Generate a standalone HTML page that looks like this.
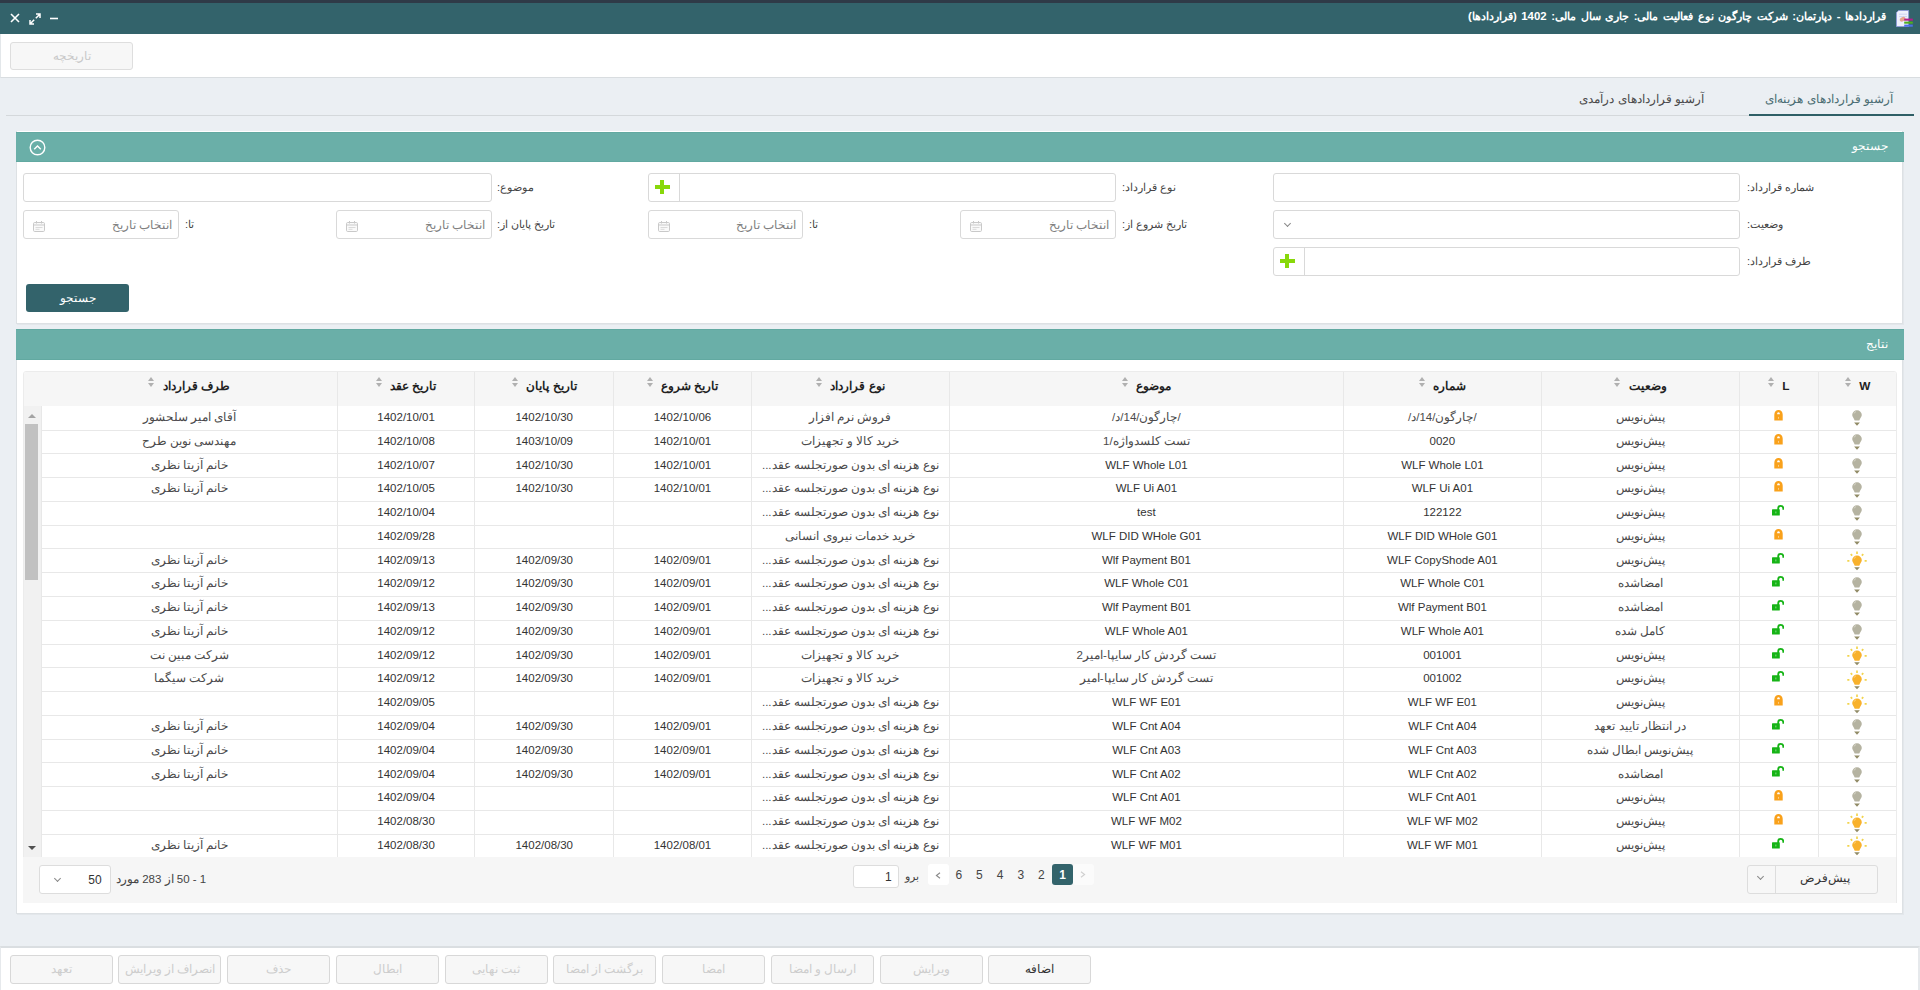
<!DOCTYPE html>
<html lang="fa"><head><meta charset="utf-8"><title>قراردادها</title>
<style>
*{box-sizing:border-box}
html,body{margin:0;padding:0}
body{width:1920px;height:990px;overflow:hidden;position:relative;background:#ebeff3;font-family:"Liberation Sans",sans-serif;font-size:11.5px;color:#333}
.abs{position:absolute}
#strip{left:0;top:0;width:1920px;height:3px;background:#2f3a47}
#title{left:0;top:3px;width:1920px;height:31px;background:#33636b}
#title .t{position:absolute;right:34px;top:5.8px;color:#fff;font-size:11.4px;word-spacing:1.4px;font-weight:bold;direction:rtl;white-space:nowrap}
#toolbar{left:0;top:34px;width:1920px;height:44px;background:#fff;border-bottom:1px solid #d9dde0;border-left:1px solid #e3e7ea}
.hbtn{position:absolute;left:9px;top:8px;width:123px;height:28px;border:1px solid #dedede;border-radius:3px;background:#f7f7f7;color:#c9c9c9;text-align:center;line-height:26px;font-size:11.5px}
#tabline{left:6px;top:115px;width:1908px;height:1px;background:#d4d8db}
#tabul{left:1749px;top:114px;width:165px;height:2.2px;background:#2f5f66}
.tab{position:absolute;top:92px;font-size:11.8px;white-space:nowrap;direction:rtl}
.panel{position:absolute;left:16px;width:1887px;background:#fff;border:1px solid #dde1e4;border-top:none;box-shadow:1px 1px 0 rgba(0,0,0,.03)}
.phead{position:absolute;left:-1px;top:0;width:1888px;height:31px;background:#6aafa8;box-shadow:inset 0 1px 0 #62a9a1,inset 0 -1px 0 #62a9a1}
.phead .t{position:absolute;right:16px;top:8px;color:#fff;font-size:11.5px;direction:rtl}
.inp{position:absolute;height:28.5px;border:1px solid #d9d9d9;border-radius:3px;background:#fff}
.lbl{position:absolute;white-space:nowrap;direction:rtl;font-size:11px;color:#444}
.dp{color:#808080;text-align:right;padding-right:6px;line-height:28.5px;direction:rtl;font-size:11.5px}
.cal{position:absolute;left:8.5px;top:9.5px;width:12px;height:11px}
.plus{position:absolute;left:0;top:0;width:30.5px;height:26.5px;border-right:1px solid #d9d9d9}
.plus:before{content:"";position:absolute;left:5.8px;top:10.7px;width:15px;height:4.2px;background:#88d80a}
.plus:after{content:"";position:absolute;left:11.2px;top:5.8px;width:4.2px;height:14.5px;background:#88d80a}
#sbtn{left:26px;top:284px;width:103px;height:28px;background:#33636b;border-radius:3px;color:#fff;text-align:center;line-height:28px;font-size:11.5px}
#tbl{left:23px;top:371px;width:1873.6px;height:486.5px;border:1px solid #ececec;border-radius:3px 3px 0 0;overflow:hidden;background:#fff}
table{border-collapse:collapse;table-layout:fixed;direction:rtl}
#th{position:absolute;left:-1px;top:-1px;width:1873.6px}
#tb th{height:35.4px;background:#f6f6f6;font-weight:bold;font-size:11.8px;color:#222;border-left:1px solid #e8e8e8;padding:0 0 8px 0;text-align:center;white-space:nowrap}
.srt{display:inline-block;width:8px;height:11px;position:relative;margin-right:6.5px;vertical-align:1.5px}
.srt:before{content:"";position:absolute;left:0;top:0;border-left:3.5px solid transparent;border-right:3.5px solid transparent;border-bottom:4.5px solid #b0b0b0}
.srt:after{content:"";position:absolute;left:0;top:6px;border-left:3.5px solid transparent;border-right:3.5px solid transparent;border-top:4.5px solid #b0b0b0}
#tb{position:absolute;left:-1px;top:-1px;width:1873.6px}
#tb td.sbc{border:none;background:#f1f1f1}
#tb th.sbh{border-left:none}
#tb th:nth-child(10){border-left:none}
#tb td{height:23.768px;border-left:1px solid #e8e8e8;border-bottom:1px solid #e8e8e8;padding:0 0 2.5px 0;line-height:14px;text-align:center;white-space:nowrap;font-size:11.5px;color:#333;overflow:hidden}
#tb td{position:relative}
.ic{position:absolute;left:50%;top:50%}
.fa{color:#4a4a4a}
#sb{position:absolute;left:-1px;top:33.7px;width:18px;height:452px;background:#f1f1f1}
#sb .up{position:absolute;left:5px;top:8px;border-left:4px solid transparent;border-right:4px solid transparent;border-bottom:4px solid #a3a3a3}
#sb .dn{position:absolute;left:5px;top:440px;border-left:4px solid transparent;border-right:4px solid transparent;border-top:4px solid #505050}
#sb .th{position:absolute;left:2px;top:18px;width:13px;height:156px;background:#c1c1c1}
#foot{left:23px;top:857.3px;width:1873.6px;height:45.4px;background:#f6f6f6;border-right:1px solid #eaeaea}
.fsel{position:absolute;height:28.5px;border:1px solid #ddd;border-radius:3px;background:#fff}
.chev{position:absolute;width:6px;height:6px;border-right:1px solid #777;border-bottom:1px solid #777;transform:rotate(45deg)}
.pg{position:absolute;top:864.3px;width:20.5px;height:21px;text-align:center;line-height:23px;font-size:12px;color:#444}
.pg.on{background:#33636b;color:#fff;border-radius:3px;font-weight:bold}
#btoolbar{left:0;top:946px;width:1920px;height:44px;background:#fff;border-top:2px solid #dadee1;border-right:2px solid #e6e9ec;border-left:1px solid #e6e9ec}
.tbtn{position:absolute;top:955px;width:103px;height:28.5px;border:1px solid #d8d8d8;border-radius:3px;background:#f7f7f7;color:#cdcdcd;text-align:center;line-height:26px;font-size:11.5px;direction:rtl}
.tbtn.act{color:#333;background:#f7f7f7}
</style></head>
<body>
<div id="strip" class="abs"></div>
<div id="title" class="abs">
  <div class="t">قراردادها - دپارتمان: شرکت چارگون نوع فعالیت مالی: جاری سال مالی: 1402 (قراردادها)</div>
  <svg class="abs" style="left:1896px;top:7px" width="17" height="17" viewBox="0 0 17 17"><path d="M2.6 .5H12.6V16.5H.5V2.6Z" fill="#eef0fc" stroke="#8d9ad8" stroke-width=".9"/><path d="M3 4.2h8M3 6.6h8" stroke="#c6ccef" stroke-width=".8"/><ellipse cx="6.6" cy="9.3" rx="3" ry="2.1" fill="#e6a48c" transform="rotate(-30 6.6 9.3)"/><rect x="8.2" y="8.6" width="8.6" height="2.1" fill="#b51d8c"/><rect x="8.2" y="11.6" width="8.6" height="2.1" fill="#52ad1f"/><rect x="8.2" y="14.6" width="8.6" height="2.1" fill="#4d6fe6"/></svg>
  <svg class="abs" style="left:10px;top:10px" width="10" height="10" viewBox="0 0 10 10"><path d="M1 1l8 8M9 1l-8 8" stroke="#fff" stroke-width="1.6"/></svg>
  <svg class="abs" style="left:29px;top:10px" width="12" height="12" viewBox="0 0 12 12"><path d="M6.8 5.2L10.8 1.2M7 1h4v4M5.2 6.8L1.2 10.8M1 7v4h4" stroke="#fff" stroke-width="1.5" fill="none"/></svg>
  <svg class="abs" style="left:49px;top:14px" width="10" height="3" viewBox="0 0 10 3"><path d="M1 1.5h8" stroke="#fff" stroke-width="1.6"/></svg>
</div>
<div id="toolbar" class="abs"><div class="hbtn">تاریخچه</div></div>

<div class="tab" style="right:27px;color:#4a6d72">آرشیو قراردادهای هزینه‌ای</div>
<div class="tab" style="right:216px;color:#4a4a4a">آرشیو قراردادهای درآمدی</div>
<div id="tabline" class="abs"></div>
<div id="tabul" class="abs"></div>

<div class="panel" style="top:131px;height:192.5px">
  <div class="phead" style="top:0.8px;height:30.4px"><div class="t" style="top:7.3px">جستجو</div>
    <svg class="abs" style="left:13px;top:7px" width="17" height="17" viewBox="0 0 17 17"><circle cx="8.5" cy="8.5" r="7.3" fill="none" stroke="#fff" stroke-width="1.4"/><path d="M5.2 10.2l3.3-3.3 3.3 3.3" fill="none" stroke="#fff" stroke-width="1.4"/></svg>
  </div>
</div>
<!-- search form (page coords) -->
<div class="inp" style="left:1273px;top:173px;width:467px"></div>
<div class="lbl" style="left:1747px;top:181px">شماره قرارداد:</div>
<div class="inp" style="left:1273px;top:210px;width:467px"><div class="chev" style="left:11px;top:9.5px;width:5px;height:5px;border-color:#888"></div></div>
<div class="lbl" style="left:1747px;top:218px">وضعیت:</div>
<div class="inp" style="left:1273px;top:247px;width:467px"><div class="plus"></div></div>
<div class="lbl" style="left:1747px;top:255px">طرف قرارداد:</div>

<div class="inp" style="left:648px;top:173px;width:468px"><div class="plus"></div></div>
<div class="lbl" style="left:1122px;top:181px">نوع قرارداد:</div>
<div class="inp dp" style="left:960px;top:210px;width:156px"><svg class="cal" viewBox="0 0 12 11"><rect x=".5" y="1.5" width="11" height="9" rx="1.2" fill="#fafafa" stroke="#c9c9c9"/><path d="M.5 4h11" stroke="#c9c9c9"/><path d="M3.5 0v2.5M8.5 0v2.5" stroke="#c9c9c9"/><path d="M2.5 6.5h7M2.5 8.3h4" stroke="#dadada"/></svg>انتخاب تاریخ</div>
<div class="lbl" style="left:1122px;top:218px">تاریخ شروع از:</div>
<div class="inp dp" style="left:648px;top:210px;width:155px"><svg class="cal" viewBox="0 0 12 11"><rect x=".5" y="1.5" width="11" height="9" rx="1.2" fill="#fafafa" stroke="#c9c9c9"/><path d="M.5 4h11" stroke="#c9c9c9"/><path d="M3.5 0v2.5M8.5 0v2.5" stroke="#c9c9c9"/><path d="M2.5 6.5h7M2.5 8.3h4" stroke="#dadada"/></svg>انتخاب تاریخ</div>
<div class="lbl" style="left:809px;top:218px">تا:</div>

<div class="inp" style="left:23px;top:173px;width:469px"></div>
<div class="lbl" style="left:497px;top:181px">موضوع:</div>
<div class="inp dp" style="left:336px;top:210px;width:156px"><svg class="cal" viewBox="0 0 12 11"><rect x=".5" y="1.5" width="11" height="9" rx="1.2" fill="#fafafa" stroke="#c9c9c9"/><path d="M.5 4h11" stroke="#c9c9c9"/><path d="M3.5 0v2.5M8.5 0v2.5" stroke="#c9c9c9"/><path d="M2.5 6.5h7M2.5 8.3h4" stroke="#dadada"/></svg>انتخاب تاریخ</div>
<div class="lbl" style="left:497px;top:218px">تاریخ پایان از:</div>
<div class="inp dp" style="left:23px;top:210px;width:156px"><svg class="cal" viewBox="0 0 12 11"><rect x=".5" y="1.5" width="11" height="9" rx="1.2" fill="#fafafa" stroke="#c9c9c9"/><path d="M.5 4h11" stroke="#c9c9c9"/><path d="M3.5 0v2.5M8.5 0v2.5" stroke="#c9c9c9"/><path d="M2.5 6.5h7M2.5 8.3h4" stroke="#dadada"/></svg>انتخاب تاریخ</div>
<div class="lbl" style="left:185px;top:218px">تا:</div>
<div id="sbtn" class="abs">جستجو</div>

<div class="panel" style="top:329px;height:585px">
  <div class="phead"><div class="t">نتایج</div></div>
</div>

<div id="tbl" class="abs">
  <table id="tb"><colgroup><col style="width:78.60px"><col style="width:78.70px"><col style="width:198.10px"><col style="width:197.70px"><col style="width:394.30px"><col style="width:198.00px"><col style="width:137.50px"><col style="width:139.00px"><col style="width:137.30px"><col style="width:296.40px"><col style="width:18px"></colgroup><tr><th>W<span class="srt"></span></th><th>L<span class="srt"></span></th><th>وضعیت<span class="srt"></span></th><th>شماره<span class="srt"></span></th><th>موضوع<span class="srt"></span></th><th>نوع قرارداد<span class="srt"></span></th><th>تاریخ شروع<span class="srt"></span></th><th>تاریخ پایان<span class="srt"></span></th><th>تاریخ عقد<span class="srt"></span></th><th>طرف قرارداد<span class="srt"></span></th><th class="sbh"></th></tr><tr><td><svg class="ic" style="margin:-7.95px 0 0 -6.55px" width="12" height="17" viewBox="0 0 12 17"><path d="M1.2 5.1A4.8 4.8 0 1 1 10.8 5.1C10.8 7 9 8.3 8.3 10.5H3.7C3 8.3 1.2 7 1.2 5.1Z" fill="#b5b3a1"/><path d="M3.2 3.4A3.2 3.2 0 0 1 4.8 1.6" stroke="#e6e5dc" stroke-width=".7" fill="none"/><path d="M3.1 12.4H8.9L6 15.7Z" fill="#918b66"/></svg></td><td><svg class="ic" style="margin:-8.3px 0 0 -4.8px" width="9" height="11" viewBox="0 0 9 11"><path d="M.3 10.6V4.8C.3 1.6 2 0 4.5 0S8.7 1.6 8.7 4.8V10.6Z" fill="#f9a11b"/><path d="M3.1 4.3C3.1 3 3.6 2.3 4.5 2.3S5.9 3 5.9 4.3Z" fill="#fff"/><rect x="4.15" y="6.9" width=".7" height="1.9" fill="#fde0b0"/></svg></td><td><span class="fa">پیش‌نویس</span></td><td><span class="fa">/چارگون/14/د/</span></td><td><span class="fa">/چارگون/14/د/</span></td><td><span class="fa">فروش نرم افزار</span></td><td>1402/10/06</td><td>1402/10/30</td><td>1402/10/01</td><td><span class="fa">آقای امیر سلحشور</span></td><td class="sbc"></td></tr><tr><td><svg class="ic" style="margin:-7.95px 0 0 -6.55px" width="12" height="17" viewBox="0 0 12 17"><path d="M1.2 5.1A4.8 4.8 0 1 1 10.8 5.1C10.8 7 9 8.3 8.3 10.5H3.7C3 8.3 1.2 7 1.2 5.1Z" fill="#b5b3a1"/><path d="M3.2 3.4A3.2 3.2 0 0 1 4.8 1.6" stroke="#e6e5dc" stroke-width=".7" fill="none"/><path d="M3.1 12.4H8.9L6 15.7Z" fill="#918b66"/></svg></td><td><svg class="ic" style="margin:-8.3px 0 0 -4.8px" width="9" height="11" viewBox="0 0 9 11"><path d="M.3 10.6V4.8C.3 1.6 2 0 4.5 0S8.7 1.6 8.7 4.8V10.6Z" fill="#f9a11b"/><path d="M3.1 4.3C3.1 3 3.6 2.3 4.5 2.3S5.9 3 5.9 4.3Z" fill="#fff"/><rect x="4.15" y="6.9" width=".7" height="1.9" fill="#fde0b0"/></svg></td><td><span class="fa">پیش‌نویس</span></td><td>0020</td><td><span class="fa">تست کلسدواژه/1</span></td><td><span class="fa">خرید کالا و تجهیزات</span></td><td>1402/10/01</td><td>1403/10/09</td><td>1402/10/08</td><td><span class="fa">مهندسی نوین طرح</span></td><td class="sbc"></td></tr><tr><td><svg class="ic" style="margin:-7.95px 0 0 -6.55px" width="12" height="17" viewBox="0 0 12 17"><path d="M1.2 5.1A4.8 4.8 0 1 1 10.8 5.1C10.8 7 9 8.3 8.3 10.5H3.7C3 8.3 1.2 7 1.2 5.1Z" fill="#b5b3a1"/><path d="M3.2 3.4A3.2 3.2 0 0 1 4.8 1.6" stroke="#e6e5dc" stroke-width=".7" fill="none"/><path d="M3.1 12.4H8.9L6 15.7Z" fill="#918b66"/></svg></td><td><svg class="ic" style="margin:-8.3px 0 0 -4.8px" width="9" height="11" viewBox="0 0 9 11"><path d="M.3 10.6V4.8C.3 1.6 2 0 4.5 0S8.7 1.6 8.7 4.8V10.6Z" fill="#f9a11b"/><path d="M3.1 4.3C3.1 3 3.6 2.3 4.5 2.3S5.9 3 5.9 4.3Z" fill="#fff"/><rect x="4.15" y="6.9" width=".7" height="1.9" fill="#fde0b0"/></svg></td><td><span class="fa">پیش‌نویس</span></td><td>WLF Whole L01</td><td>WLF Whole L01</td><td><span class="fa">نوع هزینه ای بدون صورتجلسه عقد...</span></td><td>1402/10/01</td><td>1402/10/30</td><td>1402/10/07</td><td><span class="fa">خانم آزیتا نظری</span></td><td class="sbc"></td></tr><tr><td><svg class="ic" style="margin:-7.95px 0 0 -6.55px" width="12" height="17" viewBox="0 0 12 17"><path d="M1.2 5.1A4.8 4.8 0 1 1 10.8 5.1C10.8 7 9 8.3 8.3 10.5H3.7C3 8.3 1.2 7 1.2 5.1Z" fill="#b5b3a1"/><path d="M3.2 3.4A3.2 3.2 0 0 1 4.8 1.6" stroke="#e6e5dc" stroke-width=".7" fill="none"/><path d="M3.1 12.4H8.9L6 15.7Z" fill="#918b66"/></svg></td><td><svg class="ic" style="margin:-8.3px 0 0 -4.8px" width="9" height="11" viewBox="0 0 9 11"><path d="M.3 10.6V4.8C.3 1.6 2 0 4.5 0S8.7 1.6 8.7 4.8V10.6Z" fill="#f9a11b"/><path d="M3.1 4.3C3.1 3 3.6 2.3 4.5 2.3S5.9 3 5.9 4.3Z" fill="#fff"/><rect x="4.15" y="6.9" width=".7" height="1.9" fill="#fde0b0"/></svg></td><td><span class="fa">پیش‌نویس</span></td><td>WLF Ui A01</td><td>WLF Ui A01</td><td><span class="fa">نوع هزینه ای بدون صورتجلسه عقد...</span></td><td>1402/10/01</td><td>1402/10/30</td><td>1402/10/05</td><td><span class="fa">خانم آزیتا نظری</span></td><td class="sbc"></td></tr><tr><td><svg class="ic" style="margin:-7.95px 0 0 -6.55px" width="12" height="17" viewBox="0 0 12 17"><path d="M1.2 5.1A4.8 4.8 0 1 1 10.8 5.1C10.8 7 9 8.3 8.3 10.5H3.7C3 8.3 1.2 7 1.2 5.1Z" fill="#b5b3a1"/><path d="M3.2 3.4A3.2 3.2 0 0 1 4.8 1.6" stroke="#e6e5dc" stroke-width=".7" fill="none"/><path d="M3.1 12.4H8.9L6 15.7Z" fill="#918b66"/></svg></td><td><svg class="ic" style="margin:-8.3px 0 0 -6.3px" width="12" height="11" viewBox="0 0 12 11"><path d="M6.2 5V3.5A2.55 2.55 0 0 1 11.3 3.5V4.7" stroke="#16b416" stroke-width="1.8" fill="none"/><rect x="0" y="4.2" width="7.8" height="6.4" rx=".6" fill="#16b416"/><rect x="3.55" y="6.5" width=".7" height="1.9" fill="#b5e8b5"/></svg></td><td><span class="fa">پیش‌نویس</span></td><td>122122</td><td>test</td><td><span class="fa">نوع هزینه ای بدون صورتجلسه عقد...</span></td><td></td><td></td><td>1402/10/04</td><td></td><td class="sbc"></td></tr><tr><td><svg class="ic" style="margin:-7.95px 0 0 -6.55px" width="12" height="17" viewBox="0 0 12 17"><path d="M1.2 5.1A4.8 4.8 0 1 1 10.8 5.1C10.8 7 9 8.3 8.3 10.5H3.7C3 8.3 1.2 7 1.2 5.1Z" fill="#b5b3a1"/><path d="M3.2 3.4A3.2 3.2 0 0 1 4.8 1.6" stroke="#e6e5dc" stroke-width=".7" fill="none"/><path d="M3.1 12.4H8.9L6 15.7Z" fill="#918b66"/></svg></td><td><svg class="ic" style="margin:-8.3px 0 0 -4.8px" width="9" height="11" viewBox="0 0 9 11"><path d="M.3 10.6V4.8C.3 1.6 2 0 4.5 0S8.7 1.6 8.7 4.8V10.6Z" fill="#f9a11b"/><path d="M3.1 4.3C3.1 3 3.6 2.3 4.5 2.3S5.9 3 5.9 4.3Z" fill="#fff"/><rect x="4.15" y="6.9" width=".7" height="1.9" fill="#fde0b0"/></svg></td><td><span class="fa">پیش‌نویس</span></td><td>WLF DID WHole G01</td><td>WLF DID WHole G01</td><td><span class="fa">خرید خدمات نیروی انسانی</span></td><td></td><td></td><td>1402/09/28</td><td></td><td class="sbc"></td></tr><tr><td><svg class="ic" style="margin:-9.75px 0 0 -10.3px" width="20" height="20" viewBox="0 0 20 20"><path d="M5.2 9.3A4.8 4.8 0 1 1 14.8 9.3C14.8 11.2 13 12.5 12.3 14.7H7.7C7 12.5 5.2 11.2 5.2 9.3Z" fill="#f8b12c"/><path d="M7.2 7.6A3.2 3.2 0 0 1 8.8 5.8" stroke="#fde7b0" stroke-width=".7" fill="none"/><g stroke="#f2d44c" stroke-width="1.7"><path d="M10 .6V3.1M3.7 3.1L5.2 4.6M16.3 3.1L14.8 4.6M.3 9.8H2.4M17.6 9.8H19.7"/></g><path d="M7.2 16.2H12.8L10 19.3Z" fill="#918b66"/></svg></td><td><svg class="ic" style="margin:-8.3px 0 0 -6.3px" width="12" height="11" viewBox="0 0 12 11"><path d="M6.2 5V3.5A2.55 2.55 0 0 1 11.3 3.5V4.7" stroke="#16b416" stroke-width="1.8" fill="none"/><rect x="0" y="4.2" width="7.8" height="6.4" rx=".6" fill="#16b416"/><rect x="3.55" y="6.5" width=".7" height="1.9" fill="#b5e8b5"/></svg></td><td><span class="fa">پیش‌نویس</span></td><td>WLF CopyShode A01</td><td>Wlf Payment B01</td><td><span class="fa">نوع هزینه ای بدون صورتجلسه عقد...</span></td><td>1402/09/01</td><td>1402/09/30</td><td>1402/09/13</td><td><span class="fa">خانم آزیتا نظری</span></td><td class="sbc"></td></tr><tr><td><svg class="ic" style="margin:-7.95px 0 0 -6.55px" width="12" height="17" viewBox="0 0 12 17"><path d="M1.2 5.1A4.8 4.8 0 1 1 10.8 5.1C10.8 7 9 8.3 8.3 10.5H3.7C3 8.3 1.2 7 1.2 5.1Z" fill="#b5b3a1"/><path d="M3.2 3.4A3.2 3.2 0 0 1 4.8 1.6" stroke="#e6e5dc" stroke-width=".7" fill="none"/><path d="M3.1 12.4H8.9L6 15.7Z" fill="#918b66"/></svg></td><td><svg class="ic" style="margin:-8.3px 0 0 -6.3px" width="12" height="11" viewBox="0 0 12 11"><path d="M6.2 5V3.5A2.55 2.55 0 0 1 11.3 3.5V4.7" stroke="#16b416" stroke-width="1.8" fill="none"/><rect x="0" y="4.2" width="7.8" height="6.4" rx=".6" fill="#16b416"/><rect x="3.55" y="6.5" width=".7" height="1.9" fill="#b5e8b5"/></svg></td><td><span class="fa">امضاشده</span></td><td>WLF Whole C01</td><td>WLF Whole C01</td><td><span class="fa">نوع هزینه ای بدون صورتجلسه عقد...</span></td><td>1402/09/01</td><td>1402/09/30</td><td>1402/09/12</td><td><span class="fa">خانم آزیتا نظری</span></td><td class="sbc"></td></tr><tr><td><svg class="ic" style="margin:-7.95px 0 0 -6.55px" width="12" height="17" viewBox="0 0 12 17"><path d="M1.2 5.1A4.8 4.8 0 1 1 10.8 5.1C10.8 7 9 8.3 8.3 10.5H3.7C3 8.3 1.2 7 1.2 5.1Z" fill="#b5b3a1"/><path d="M3.2 3.4A3.2 3.2 0 0 1 4.8 1.6" stroke="#e6e5dc" stroke-width=".7" fill="none"/><path d="M3.1 12.4H8.9L6 15.7Z" fill="#918b66"/></svg></td><td><svg class="ic" style="margin:-8.3px 0 0 -6.3px" width="12" height="11" viewBox="0 0 12 11"><path d="M6.2 5V3.5A2.55 2.55 0 0 1 11.3 3.5V4.7" stroke="#16b416" stroke-width="1.8" fill="none"/><rect x="0" y="4.2" width="7.8" height="6.4" rx=".6" fill="#16b416"/><rect x="3.55" y="6.5" width=".7" height="1.9" fill="#b5e8b5"/></svg></td><td><span class="fa">امضاشده</span></td><td>Wlf Payment B01</td><td>Wlf Payment B01</td><td><span class="fa">نوع هزینه ای بدون صورتجلسه عقد...</span></td><td>1402/09/01</td><td>1402/09/30</td><td>1402/09/13</td><td><span class="fa">خانم آزیتا نظری</span></td><td class="sbc"></td></tr><tr><td><svg class="ic" style="margin:-7.95px 0 0 -6.55px" width="12" height="17" viewBox="0 0 12 17"><path d="M1.2 5.1A4.8 4.8 0 1 1 10.8 5.1C10.8 7 9 8.3 8.3 10.5H3.7C3 8.3 1.2 7 1.2 5.1Z" fill="#b5b3a1"/><path d="M3.2 3.4A3.2 3.2 0 0 1 4.8 1.6" stroke="#e6e5dc" stroke-width=".7" fill="none"/><path d="M3.1 12.4H8.9L6 15.7Z" fill="#918b66"/></svg></td><td><svg class="ic" style="margin:-8.3px 0 0 -6.3px" width="12" height="11" viewBox="0 0 12 11"><path d="M6.2 5V3.5A2.55 2.55 0 0 1 11.3 3.5V4.7" stroke="#16b416" stroke-width="1.8" fill="none"/><rect x="0" y="4.2" width="7.8" height="6.4" rx=".6" fill="#16b416"/><rect x="3.55" y="6.5" width=".7" height="1.9" fill="#b5e8b5"/></svg></td><td><span class="fa">کامل شده</span></td><td>WLF Whole A01</td><td>WLF Whole A01</td><td><span class="fa">نوع هزینه ای بدون صورتجلسه عقد...</span></td><td>1402/09/01</td><td>1402/09/30</td><td>1402/09/12</td><td><span class="fa">خانم آزیتا نظری</span></td><td class="sbc"></td></tr><tr><td><svg class="ic" style="margin:-9.75px 0 0 -10.3px" width="20" height="20" viewBox="0 0 20 20"><path d="M5.2 9.3A4.8 4.8 0 1 1 14.8 9.3C14.8 11.2 13 12.5 12.3 14.7H7.7C7 12.5 5.2 11.2 5.2 9.3Z" fill="#f8b12c"/><path d="M7.2 7.6A3.2 3.2 0 0 1 8.8 5.8" stroke="#fde7b0" stroke-width=".7" fill="none"/><g stroke="#f2d44c" stroke-width="1.7"><path d="M10 .6V3.1M3.7 3.1L5.2 4.6M16.3 3.1L14.8 4.6M.3 9.8H2.4M17.6 9.8H19.7"/></g><path d="M7.2 16.2H12.8L10 19.3Z" fill="#918b66"/></svg></td><td><svg class="ic" style="margin:-8.3px 0 0 -6.3px" width="12" height="11" viewBox="0 0 12 11"><path d="M6.2 5V3.5A2.55 2.55 0 0 1 11.3 3.5V4.7" stroke="#16b416" stroke-width="1.8" fill="none"/><rect x="0" y="4.2" width="7.8" height="6.4" rx=".6" fill="#16b416"/><rect x="3.55" y="6.5" width=".7" height="1.9" fill="#b5e8b5"/></svg></td><td><span class="fa">پیش‌نویس</span></td><td>001001</td><td><span class="fa">تست گردش کار سایپا-امیر2</span></td><td><span class="fa">خرید کالا و تجهیزات</span></td><td>1402/09/01</td><td>1402/09/30</td><td>1402/09/12</td><td><span class="fa">شرکت مبین نت</span></td><td class="sbc"></td></tr><tr><td><svg class="ic" style="margin:-9.75px 0 0 -10.3px" width="20" height="20" viewBox="0 0 20 20"><path d="M5.2 9.3A4.8 4.8 0 1 1 14.8 9.3C14.8 11.2 13 12.5 12.3 14.7H7.7C7 12.5 5.2 11.2 5.2 9.3Z" fill="#f8b12c"/><path d="M7.2 7.6A3.2 3.2 0 0 1 8.8 5.8" stroke="#fde7b0" stroke-width=".7" fill="none"/><g stroke="#f2d44c" stroke-width="1.7"><path d="M10 .6V3.1M3.7 3.1L5.2 4.6M16.3 3.1L14.8 4.6M.3 9.8H2.4M17.6 9.8H19.7"/></g><path d="M7.2 16.2H12.8L10 19.3Z" fill="#918b66"/></svg></td><td><svg class="ic" style="margin:-8.3px 0 0 -6.3px" width="12" height="11" viewBox="0 0 12 11"><path d="M6.2 5V3.5A2.55 2.55 0 0 1 11.3 3.5V4.7" stroke="#16b416" stroke-width="1.8" fill="none"/><rect x="0" y="4.2" width="7.8" height="6.4" rx=".6" fill="#16b416"/><rect x="3.55" y="6.5" width=".7" height="1.9" fill="#b5e8b5"/></svg></td><td><span class="fa">پیش‌نویس</span></td><td>001002</td><td><span class="fa">تست گردش کار سایپا-امیر</span></td><td><span class="fa">خرید کالا و تجهیزات</span></td><td>1402/09/01</td><td>1402/09/30</td><td>1402/09/12</td><td><span class="fa">شرکت سیگما</span></td><td class="sbc"></td></tr><tr><td><svg class="ic" style="margin:-9.75px 0 0 -10.3px" width="20" height="20" viewBox="0 0 20 20"><path d="M5.2 9.3A4.8 4.8 0 1 1 14.8 9.3C14.8 11.2 13 12.5 12.3 14.7H7.7C7 12.5 5.2 11.2 5.2 9.3Z" fill="#f8b12c"/><path d="M7.2 7.6A3.2 3.2 0 0 1 8.8 5.8" stroke="#fde7b0" stroke-width=".7" fill="none"/><g stroke="#f2d44c" stroke-width="1.7"><path d="M10 .6V3.1M3.7 3.1L5.2 4.6M16.3 3.1L14.8 4.6M.3 9.8H2.4M17.6 9.8H19.7"/></g><path d="M7.2 16.2H12.8L10 19.3Z" fill="#918b66"/></svg></td><td><svg class="ic" style="margin:-8.3px 0 0 -4.8px" width="9" height="11" viewBox="0 0 9 11"><path d="M.3 10.6V4.8C.3 1.6 2 0 4.5 0S8.7 1.6 8.7 4.8V10.6Z" fill="#f9a11b"/><path d="M3.1 4.3C3.1 3 3.6 2.3 4.5 2.3S5.9 3 5.9 4.3Z" fill="#fff"/><rect x="4.15" y="6.9" width=".7" height="1.9" fill="#fde0b0"/></svg></td><td><span class="fa">پیش‌نویس</span></td><td>WLF WF E01</td><td>WLF WF E01</td><td><span class="fa">نوع هزینه ای بدون صورتجلسه عقد...</span></td><td></td><td></td><td>1402/09/05</td><td></td><td class="sbc"></td></tr><tr><td><svg class="ic" style="margin:-7.95px 0 0 -6.55px" width="12" height="17" viewBox="0 0 12 17"><path d="M1.2 5.1A4.8 4.8 0 1 1 10.8 5.1C10.8 7 9 8.3 8.3 10.5H3.7C3 8.3 1.2 7 1.2 5.1Z" fill="#b5b3a1"/><path d="M3.2 3.4A3.2 3.2 0 0 1 4.8 1.6" stroke="#e6e5dc" stroke-width=".7" fill="none"/><path d="M3.1 12.4H8.9L6 15.7Z" fill="#918b66"/></svg></td><td><svg class="ic" style="margin:-8.3px 0 0 -6.3px" width="12" height="11" viewBox="0 0 12 11"><path d="M6.2 5V3.5A2.55 2.55 0 0 1 11.3 3.5V4.7" stroke="#16b416" stroke-width="1.8" fill="none"/><rect x="0" y="4.2" width="7.8" height="6.4" rx=".6" fill="#16b416"/><rect x="3.55" y="6.5" width=".7" height="1.9" fill="#b5e8b5"/></svg></td><td><span class="fa">در انتظار تایید تعهد</span></td><td>WLF Cnt A04</td><td>WLF Cnt A04</td><td><span class="fa">نوع هزینه ای بدون صورتجلسه عقد...</span></td><td>1402/09/01</td><td>1402/09/30</td><td>1402/09/04</td><td><span class="fa">خانم آزیتا نظری</span></td><td class="sbc"></td></tr><tr><td><svg class="ic" style="margin:-7.95px 0 0 -6.55px" width="12" height="17" viewBox="0 0 12 17"><path d="M1.2 5.1A4.8 4.8 0 1 1 10.8 5.1C10.8 7 9 8.3 8.3 10.5H3.7C3 8.3 1.2 7 1.2 5.1Z" fill="#b5b3a1"/><path d="M3.2 3.4A3.2 3.2 0 0 1 4.8 1.6" stroke="#e6e5dc" stroke-width=".7" fill="none"/><path d="M3.1 12.4H8.9L6 15.7Z" fill="#918b66"/></svg></td><td><svg class="ic" style="margin:-8.3px 0 0 -6.3px" width="12" height="11" viewBox="0 0 12 11"><path d="M6.2 5V3.5A2.55 2.55 0 0 1 11.3 3.5V4.7" stroke="#16b416" stroke-width="1.8" fill="none"/><rect x="0" y="4.2" width="7.8" height="6.4" rx=".6" fill="#16b416"/><rect x="3.55" y="6.5" width=".7" height="1.9" fill="#b5e8b5"/></svg></td><td><span class="fa">پیش‌نویس ابطال شده</span></td><td>WLF Cnt A03</td><td>WLF Cnt A03</td><td><span class="fa">نوع هزینه ای بدون صورتجلسه عقد...</span></td><td>1402/09/01</td><td>1402/09/30</td><td>1402/09/04</td><td><span class="fa">خانم آزیتا نظری</span></td><td class="sbc"></td></tr><tr><td><svg class="ic" style="margin:-7.95px 0 0 -6.55px" width="12" height="17" viewBox="0 0 12 17"><path d="M1.2 5.1A4.8 4.8 0 1 1 10.8 5.1C10.8 7 9 8.3 8.3 10.5H3.7C3 8.3 1.2 7 1.2 5.1Z" fill="#b5b3a1"/><path d="M3.2 3.4A3.2 3.2 0 0 1 4.8 1.6" stroke="#e6e5dc" stroke-width=".7" fill="none"/><path d="M3.1 12.4H8.9L6 15.7Z" fill="#918b66"/></svg></td><td><svg class="ic" style="margin:-8.3px 0 0 -6.3px" width="12" height="11" viewBox="0 0 12 11"><path d="M6.2 5V3.5A2.55 2.55 0 0 1 11.3 3.5V4.7" stroke="#16b416" stroke-width="1.8" fill="none"/><rect x="0" y="4.2" width="7.8" height="6.4" rx=".6" fill="#16b416"/><rect x="3.55" y="6.5" width=".7" height="1.9" fill="#b5e8b5"/></svg></td><td><span class="fa">امضاشده</span></td><td>WLF Cnt A02</td><td>WLF Cnt A02</td><td><span class="fa">نوع هزینه ای بدون صورتجلسه عقد...</span></td><td>1402/09/01</td><td>1402/09/30</td><td>1402/09/04</td><td><span class="fa">خانم آزیتا نظری</span></td><td class="sbc"></td></tr><tr><td><svg class="ic" style="margin:-7.95px 0 0 -6.55px" width="12" height="17" viewBox="0 0 12 17"><path d="M1.2 5.1A4.8 4.8 0 1 1 10.8 5.1C10.8 7 9 8.3 8.3 10.5H3.7C3 8.3 1.2 7 1.2 5.1Z" fill="#b5b3a1"/><path d="M3.2 3.4A3.2 3.2 0 0 1 4.8 1.6" stroke="#e6e5dc" stroke-width=".7" fill="none"/><path d="M3.1 12.4H8.9L6 15.7Z" fill="#918b66"/></svg></td><td><svg class="ic" style="margin:-8.3px 0 0 -4.8px" width="9" height="11" viewBox="0 0 9 11"><path d="M.3 10.6V4.8C.3 1.6 2 0 4.5 0S8.7 1.6 8.7 4.8V10.6Z" fill="#f9a11b"/><path d="M3.1 4.3C3.1 3 3.6 2.3 4.5 2.3S5.9 3 5.9 4.3Z" fill="#fff"/><rect x="4.15" y="6.9" width=".7" height="1.9" fill="#fde0b0"/></svg></td><td><span class="fa">پیش‌نویس</span></td><td>WLF Cnt A01</td><td>WLF Cnt A01</td><td><span class="fa">نوع هزینه ای بدون صورتجلسه عقد...</span></td><td></td><td></td><td>1402/09/04</td><td></td><td class="sbc"></td></tr><tr><td><svg class="ic" style="margin:-9.75px 0 0 -10.3px" width="20" height="20" viewBox="0 0 20 20"><path d="M5.2 9.3A4.8 4.8 0 1 1 14.8 9.3C14.8 11.2 13 12.5 12.3 14.7H7.7C7 12.5 5.2 11.2 5.2 9.3Z" fill="#f8b12c"/><path d="M7.2 7.6A3.2 3.2 0 0 1 8.8 5.8" stroke="#fde7b0" stroke-width=".7" fill="none"/><g stroke="#f2d44c" stroke-width="1.7"><path d="M10 .6V3.1M3.7 3.1L5.2 4.6M16.3 3.1L14.8 4.6M.3 9.8H2.4M17.6 9.8H19.7"/></g><path d="M7.2 16.2H12.8L10 19.3Z" fill="#918b66"/></svg></td><td><svg class="ic" style="margin:-8.3px 0 0 -4.8px" width="9" height="11" viewBox="0 0 9 11"><path d="M.3 10.6V4.8C.3 1.6 2 0 4.5 0S8.7 1.6 8.7 4.8V10.6Z" fill="#f9a11b"/><path d="M3.1 4.3C3.1 3 3.6 2.3 4.5 2.3S5.9 3 5.9 4.3Z" fill="#fff"/><rect x="4.15" y="6.9" width=".7" height="1.9" fill="#fde0b0"/></svg></td><td><span class="fa">پیش‌نویس</span></td><td>WLF WF M02</td><td>WLF WF M02</td><td><span class="fa">نوع هزینه ای بدون صورتجلسه عقد...</span></td><td></td><td></td><td>1402/08/30</td><td></td><td class="sbc"></td></tr><tr><td><svg class="ic" style="margin:-9.75px 0 0 -10.3px" width="20" height="20" viewBox="0 0 20 20"><path d="M5.2 9.3A4.8 4.8 0 1 1 14.8 9.3C14.8 11.2 13 12.5 12.3 14.7H7.7C7 12.5 5.2 11.2 5.2 9.3Z" fill="#f8b12c"/><path d="M7.2 7.6A3.2 3.2 0 0 1 8.8 5.8" stroke="#fde7b0" stroke-width=".7" fill="none"/><g stroke="#f2d44c" stroke-width="1.7"><path d="M10 .6V3.1M3.7 3.1L5.2 4.6M16.3 3.1L14.8 4.6M.3 9.8H2.4M17.6 9.8H19.7"/></g><path d="M7.2 16.2H12.8L10 19.3Z" fill="#918b66"/></svg></td><td><svg class="ic" style="margin:-8.3px 0 0 -6.3px" width="12" height="11" viewBox="0 0 12 11"><path d="M6.2 5V3.5A2.55 2.55 0 0 1 11.3 3.5V4.7" stroke="#16b416" stroke-width="1.8" fill="none"/><rect x="0" y="4.2" width="7.8" height="6.4" rx=".6" fill="#16b416"/><rect x="3.55" y="6.5" width=".7" height="1.9" fill="#b5e8b5"/></svg></td><td><span class="fa">پیش‌نویس</span></td><td>WLF WF M01</td><td>WLF WF M01</td><td><span class="fa">نوع هزینه ای بدون صورتجلسه عقد...</span></td><td>1402/08/01</td><td>1402/08/30</td><td>1402/08/30</td><td><span class="fa">خانم آزیتا نظری</span></td><td class="sbc"></td></tr></table>
  <div id="sb"><div class="up"></div><div class="th"></div><div class="dn"></div></div>
</div>

<div id="foot" class="abs"></div>
<div class="fsel" style="left:38.7px;top:865px;width:72px"><div class="chev" style="left:15px;top:9.5px;width:5px;height:5px;border-color:#888"></div><span style="position:absolute;right:8px;top:7px;font-size:12px;color:#333">50</span></div>
<div class="lbl" style="left:116px;top:872px;font-size:11.5px">1 - 50 از 283 مورد</div>

<div class="pg" style="left:1052.3px;" >1</div>
<div class="pg on" style="left:1052.3px">1</div>
<div class="pg" style="left:1031px">2</div>
<div class="pg" style="left:1010.5px">3</div>
<div class="pg" style="left:989.8px">4</div>
<div class="pg" style="left:969px">5</div>
<div class="pg" style="left:948.5px">6</div>
<div class="pg" style="left:1073px;background:#fbfbfb;border-radius:3px"><svg style="position:absolute;left:7px;top:7px" width="6" height="7" viewBox="0 0 6 7"><path d="M1 .7L4.6 3.5 1 6.3" fill="none" stroke="#cfcfcf" stroke-width="1.1"/></svg></div>
<div class="pg" style="left:928px;background:#fff;border-radius:3px"><svg style="position:absolute;left:7px;top:7.5px" width="6" height="7" viewBox="0 0 6 7"><path d="M5 .7L1.4 3.5 5 6.3" fill="none" stroke="#8a8a8a" stroke-width="1.1"/></svg></div>
<div class="lbl" style="left:905px;top:870px">برو</div>
<div class="fsel" style="left:853.3px;top:864.7px;width:45.4px;height:23px"><span style="position:absolute;right:6px;top:4px;font-size:12px;color:#333">1</span></div>

<div class="fsel" style="left:1747.3px;top:865px;width:131px;background:#f7f7f7"><div style="position:absolute;left:27px;top:0;height:26.5px;border-left:1px solid #ddd"></div><div class="chev" style="left:10px;top:8px;width:5px;height:5px;border-color:#888"></div><span style="position:absolute;right:27px;top:4.5px;font-size:11.5px;color:#333;direction:rtl">پیش‌فرض</span></div>

<div id="btoolbar" class="abs"></div>
<div class="tbtn act" style="left:988.30px">اضافه</div><div class="tbtn" style="left:879.55px">ویرایش</div><div class="tbtn" style="left:770.80px">ارسال و امضا</div><div class="tbtn" style="left:662.05px">امضا</div><div class="tbtn" style="left:553.30px">برگشت از امضا</div><div class="tbtn" style="left:444.55px">ثبت نهایی</div><div class="tbtn" style="left:335.80px">ابطال</div><div class="tbtn" style="left:227.05px">حذف</div><div class="tbtn" style="left:118.30px">انصراف از ویرایش</div><div class="tbtn" style="left:9.55px">تعهد</div>
</body></html>
